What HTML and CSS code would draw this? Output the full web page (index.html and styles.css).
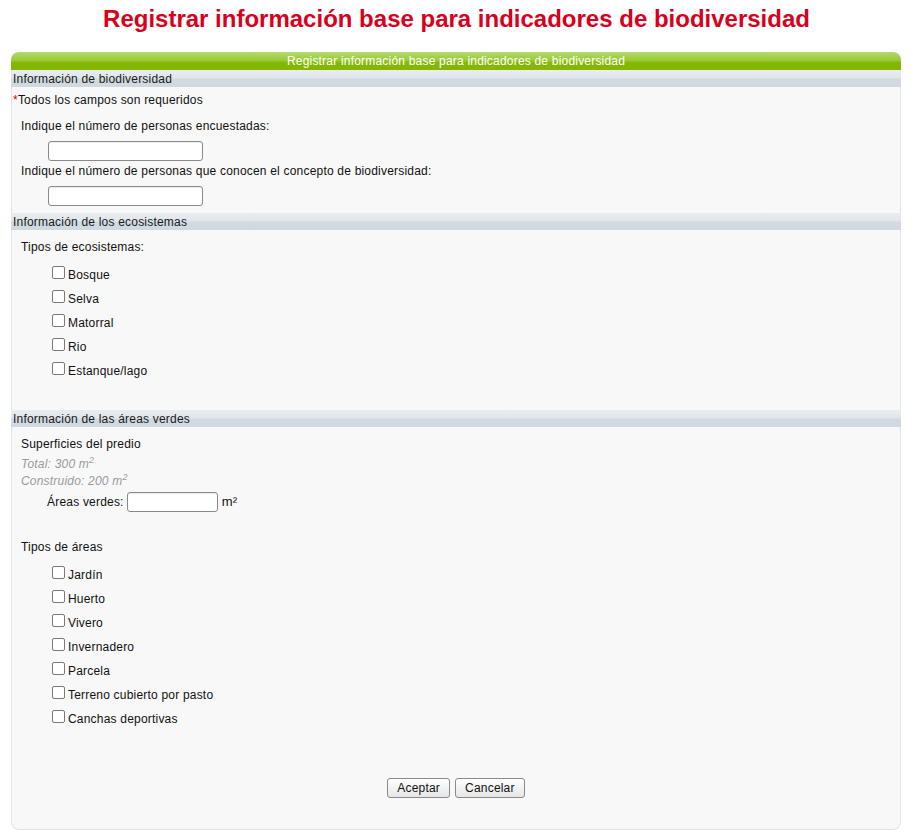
FILE: index.html
```html
<!DOCTYPE html>
<html lang="es">
<head>
<meta charset="utf-8">
<title>Registrar información base para indicadores de biodiversidad</title>
<link rel="stylesheet" href="styles.css">
</head>
<body>
<h1 class="title">Registrar información base para indicadores de biodiversidad</h1>
<form class="panel">
  <div class="panel-head">Registrar información base para indicadores de biodiversidad</div>

  <div class="sec-head">Información de biodiversidad</div>
  <div class="sec sec-bio">
    <div class="req"><span class="star">*</span>Todos los campos son requeridos</div>
    <div class="label q1">Indique el número de personas encuestadas:</div>
    <input class="field field-wide" type="text">
    <div class="label q2">Indique el número de personas que conocen el concepto de biodiversidad:</div>
    <input class="field field-wide" type="text">
  </div>

  <div class="sec-head">Información de los ecosistemas</div>
  <div class="sec sec-eco">
    <div class="label">Tipos de ecosistemas:</div>
    <div class="checks">
      <label class="check"><input type="checkbox" class="box">Bosque</label>
      <label class="check"><input type="checkbox" class="box">Selva</label>
      <label class="check"><input type="checkbox" class="box">Matorral</label>
      <label class="check"><input type="checkbox" class="box">Rio</label>
      <label class="check"><input type="checkbox" class="box">Estanque/lago</label>
    </div>
  </div>

  <div class="sec-head">Información de las áreas verdes</div>
  <div class="sec sec-areas">
    <div class="label">Superficies del predio</div>
    <div class="note note-1">Total: 300 m<sup>2</sup></div>
    <div class="note note-2">Construido: 200 m<sup>2</sup></div>
    <div class="verdes"><span>Áreas verdes:</span><input class="field field-short" type="text"><span class="unit">m²</span></div>
    <div class="label tipos">Tipos de áreas</div>
    <div class="checks">
      <label class="check"><input type="checkbox" class="box">Jardín</label>
      <label class="check"><input type="checkbox" class="box">Huerto</label>
      <label class="check"><input type="checkbox" class="box">Vivero</label>
      <label class="check"><input type="checkbox" class="box">Invernadero</label>
      <label class="check"><input type="checkbox" class="box">Parcela</label>
      <label class="check"><input type="checkbox" class="box">Terreno cubierto por pasto</label>
      <label class="check"><input type="checkbox" class="box">Canchas deportivas</label>
    </div>
    <div class="actions">
      <button type="button" class="btn">Aceptar</button>
      <button type="button" class="btn">Cancelar</button>
    </div>
  </div>
</form>
</body>
</html>
```
FILE: styles.css
```css
html, body {
  margin: 0;
  padding: 0;
  background: #ffffff;
}
body {
  font-family: "Liberation Sans", Arial, sans-serif;
  font-size: 12px;
  letter-spacing: 0.2px;
  color: #111;
}
.title {
  margin: 5px 0 19px;
  font-size: 24px;
  line-height: 28px;
  font-weight: bold;
  letter-spacing: 0;
  text-align: center;
  color: #d8001c;
}
.panel {
  margin: 0 12px 0 11px;
  display: flex;
  flex-direction: column;
}
.panel-head {
  height: 18px;
  line-height: 19px;
  border-radius: 8px 8px 0 0;
  background: linear-gradient(#b4d96c 0%, #9acb3c 45%, #84b800 60%, #84b800 100%);
  color: #fff;
  text-align: center;
  font-size: 12px;
}
.sec-head {
  height: 17px;
  line-height: 18px;
  padding-left: 2px;
  background: linear-gradient(#e9edf1 0%, #e1e6eb 45%, #d1d9e1 55%, #d0d8e0 100%);
  color: #1a1a1a;
}
.sec {
  background: #f8f8f8;
  border-left: 1px solid #e2e2e2;
  border-right: 1px solid #e2e2e2;
  display: flex;
  flex-direction: column;
  align-items: flex-start;
  line-height: 14px;
}
.sec-bio {
  padding: 6px 0 7px 0;
}
.req {
  padding-left: 1px;
}
.star {
  color: #e00000;
}
.label {
  padding-left: 9px;
}
.q1 {
  margin-top: 12px;
}
.q2 {
  margin-top: 3px;
}
.field {
  box-sizing: border-box;
  height: 20px;
  border: 1px solid #8a8a8a;
  border-radius: 3px;
  background: #fff;
  box-shadow: inset 0 1px 1px rgba(0,0,0,0.08);
  padding: 0 3px;
  font: inherit;
}
.field-wide {
  width: 155px;
  margin: 8px 0 0 36px;
}
.sec-eco {
  padding: 10px 0 28px 0;
}
.checks {
  display: flex;
  flex-direction: column;
  margin-top: 8px;
  padding-left: 40px;
}
.check {
  box-sizing: border-box;
  display: flex;
  align-items: center;
  height: 24px;
  padding-top: 2px;
}
.box {
  appearance: none;
  -webkit-appearance: none;
  box-sizing: border-box;
  width: 13px;
  height: 13px;
  margin: 0 3px 5px 0;
  border: 1px solid #7a7a7a;
  border-radius: 2px;
  background: #fff;
}
.sec-areas {
  padding: 10px 0 0 0;
  border-bottom: 1px solid #e2e2e2;
  border-radius: 0 0 8px 8px;
}
.note {
  padding-left: 9px;
  color: #9a9a9a;
  font-style: italic;
  height: 17px;
  line-height: 17px;
}
.note-1 {
  margin-top: 5px;
}
.note sup {
  font-size: 9px;
  line-height: 0;
  vertical-align: 5px;
}
.verdes {
  display: flex;
  align-items: center;
  height: 20px;
  margin-top: 2px;
  padding-left: 35px;
}
.field-short {
  width: 91px;
  margin-left: 3px;
}
.unit {
  margin-left: 4px;
  font-size: 13px;
  margin-bottom: 1px;
}
.tipos {
  margin-top: 28px;
}
.actions {
  align-self: stretch;
  display: flex;
  justify-content: center;
  gap: 5px;
  margin-top: 48px;
  margin-bottom: 31px;
}
.btn {
  box-sizing: border-box;
  height: 20px;
  padding: 0 9px;
  border: 1px solid #8a8a8a;
  border-radius: 3px;
  background: linear-gradient(#ffffff, #e6e6e6);
  font: inherit;
  letter-spacing: 0.2px;
  color: #111;
  line-height: 18px;
}
```
